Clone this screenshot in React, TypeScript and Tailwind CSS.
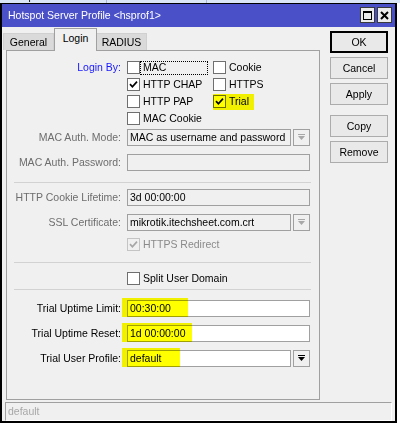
import React from 'react';

// --- small building blocks ---
const Check = ({ checked, disabled }: { checked?: boolean; disabled?: boolean }) => (
  <span
    className={`w-[13px] h-[13px] border flex items-center justify-center shrink-0 ${
      disabled ? 'border-[#c4c4c4] bg-[#f0f0f0]' : 'border-[#6f6f6f] bg-white'
    }`}
  >
    {checked && (
      <svg width="9" height="9" viewBox="0 0 9 9">
        <path d="M1 4.2 L3.4 6.8 L8 1.6" stroke={disabled ? '#a6a6a6' : '#000'} strokeWidth="1.7" fill="none" />
      </svg>
    )}
  </span>
);

const Arrow = ({ disabled }: { disabled?: boolean }) => (
  <svg width="7" height="7" viewBox="0 0 7 7">
    <rect x="0" y="0" width="7" height="1" fill={disabled ? '#a8a8a8' : '#000'} />
    <path d="M0 2 H7 L3.5 6 Z" fill={disabled ? '#a8a8a8' : '#000'} />
  </svg>
);

const Field = ({
  value,
  white,
  dropdown,
  arrowDisabled,
}: {
  value?: string;
  white?: boolean;
  dropdown?: boolean;
  arrowDisabled?: boolean;
}) => (
  <div className="flex gap-[2px] w-[183px] h-[17px]">
    <div
      className={`flex-1 h-full border border-[#a0a0a0] flex items-center px-[2px] text-black ${
        white ? 'bg-white' : 'bg-[#f0f0f0]'
      }`}
    >
      {value}
    </div>
    {dropdown && (
      <div className="w-[17px] h-full border border-[#a0a0a0] bg-[#f0f0f0] flex items-center justify-center">
        <Arrow disabled={arrowDisabled} />
      </div>
    )}
  </div>
);

const Row = ({
  label,
  muted,
  children,
  mark,
}: {
  label: string;
  muted?: boolean;
  children: React.ReactNode;
  mark?: number;
}) => (
  <div className="relative flex items-center h-[17px]">
    <div className={`w-[114px] text-right ${muted ? 'text-[#6d6d6d]' : 'text-black'}`}>{label}</div>
    <div className="ml-[6px]">{children}</div>
    {mark && (
      <div
        className="absolute left-[115px] top-[-2px] h-[19px] bg-[#ffff00] mix-blend-multiply"
        style={{ width: mark }}
      />
    )}
  </div>
);

const Sep = () => <div className="ml-[7px] w-[297px] h-px bg-[#d2d2d2]" />;

const Opt = ({
  text,
  checked,
  focus,
  w,
}: {
  text: string;
  checked?: boolean;
  focus?: boolean;
  w?: string;
}) => (
  <div className={`flex items-center h-[17px] ${w ?? ''}`}>
    <Check checked={checked} />
    <span
      className={`h-[14px] flex items-center pl-[2px] border ${
        focus ? 'border-dotted border-black w-[68px]' : 'border-transparent'
      }`}
    >
      {text}
    </span>
  </div>
);

const Btn = ({ children, def }: { children: React.ReactNode; def?: boolean }) => (
  <div
    className={`w-[58px] h-[22px] flex items-center justify-center bg-[#e9e9e9] text-black ${
      def ? 'border-2 border-black' : 'border border-[#acacac]'
    }`}
  >
    {children}
  </div>
);

export default function App() {
  return (
    <div className="w-[400px] h-[430px] bg-white overflow-hidden font-['Liberation_Sans',Arial,sans-serif] text-[10.5px] leading-none">
      {/* bit of the window behind */}
      <div className="h-[3px] bg-[#dae5f5] overflow-hidden flex relative">
        <div className="w-[107px] border-r border-[#a9b9d2] pl-[8px] text-[10px] -mt-[8px] text-black">Hotspot</div>
        <div className="w-[100px] border-r border-[#a9b9d2]" />
      </div>

      <div className="w-[397px] h-[420px] border-t border-x-2 border-b-2 border-black bg-[#f0f0f0] flex flex-col">
        {/* title bar */}
        <div className="h-[23px] bg-[#4a50c8] flex items-start">
          <div className="flex-1 h-full flex items-center pl-[6px] text-white text-[10.5px]">
            Hotspot Server Profile &lt;hsprof1&gt;
          </div>
          <div className="flex gap-[2px] pt-[3px] pr-[3px]">
            <div className="w-[15px] h-[16px] bg-[#ececec] border border-[#3a3a3a] flex items-center justify-center">
              <div className="w-[9px] h-[9px] border border-black border-t-2" />
            </div>
            <div className="w-[15px] h-[16px] bg-[#ececec] border border-[#3a3a3a] flex items-center justify-center">
              <svg width="9" height="9" viewBox="0 0 9 9">
                <path d="M1 1 L8 8 M8 1 L1 8" stroke="#000" strokeWidth="2" />
              </svg>
            </div>
          </div>
        </div>

        <div className="flex-1 flex flex-col">
          <div className="flex h-[373px]">
            {/* left: tabs + panel */}
            <div className="w-[318px] flex flex-col">
              <div className="h-[23px] flex items-end pl-[1px] text-black">
                <div className="w-[51px] h-[17px] bg-[#dadada] border border-b-0 border-[#d0d0d0] flex items-center justify-center">
                  General
                </div>
                <div className="relative z-10 w-[43px] h-[23px] -mb-px bg-[#f0f0f0] border border-b-0 border-[#a0a0a0] flex items-center justify-center pb-[3px]">
                  Login
                </div>
                <div className="w-[50px] h-[17px] bg-[#dadada] border border-b-0 border-l-0 border-[#d0d0d0] flex items-center justify-center">
                  RADIUS
                </div>
              </div>

              <div className="ml-[4px] w-[314px] h-[350px] border border-[#a0a0a0] flex flex-col">
                {/* login by */}
                <div className="flex pt-[8px]">
                  <div className="w-[114px] text-right text-[#1818ff] h-[17px] flex items-center justify-end">Login By:</div>
                  <div className="ml-[6px] grid grid-cols-[86px_auto]">
                    <Opt text="MAC" focus />
                    <Opt text="Cookie" />
                    <Opt text="HTTP CHAP" checked />
                    <Opt text="HTTPS" />
                    <Opt text="HTTP PAP" />
                    <div className="relative">
                      <Opt text="Trial" checked />
                      <div className="absolute left-0 top-[1px] w-[41px] h-[16px] bg-[#ffff00] mix-blend-multiply" />
                    </div>
                    <Opt text="MAC Cookie" />
                  </div>
                </div>

                <div className="mt-[2px] flex flex-col gap-[8px]">
                  <Row label="MAC Auth. Mode:" muted>
                    <Field value="MAC as username and password" dropdown arrowDisabled />
                  </Row>
                  <Row label="MAC Auth. Password:" muted>
                    <Field />
                  </Row>
                </div>

                <div className="mt-[11px] mb-[6px]">
                  <Sep />
                </div>

                <div className="flex flex-col gap-[8px]">
                  <Row label="HTTP Cookie Lifetime:" muted>
                    <Field value="3d 00:00:00" />
                  </Row>
                  <Row label="SSL Certificate:" muted>
                    <Field value="mikrotik.itechsheet.com.crt" dropdown arrowDisabled />
                  </Row>
                </div>

                <div className="mt-[5px] h-[17px] flex items-center pl-[120px] text-[#8a8a8a]">
                  <Check checked disabled />
                  <span className="pl-[3px]">HTTPS Redirect</span>
                </div>

                <div className="mt-[9px] mb-[7px]">
                  <Sep />
                </div>

                <div className="h-[17px] flex items-center pl-[120px] text-black">
                  <Check />
                  <span className="pl-[3px]">Split User Domain</span>
                </div>

                <div className="mt-[2px] mb-[10px]">
                  <Sep />
                </div>

                <div className="flex flex-col gap-[8px]">
                  <Row label="Trial Uptime Limit:" mark={66}>
                    <Field value="00:30:00" white />
                  </Row>
                  <Row label="Trial Uptime Reset:" mark={70}>
                    <Field value="1d 00:00:00" white />
                  </Row>
                  <Row label="Trial User Profile:" mark={58}>
                    <Field value="default" white dropdown />
                  </Row>
                </div>
              </div>
            </div>

            {/* right: buttons */}
            <div className="ml-[10px] pt-[4px] flex flex-col">
              <Btn def>OK</Btn>
              <div className="mt-[4px]"><Btn>Cancel</Btn></div>
              <div className="mt-[4px]"><Btn>Apply</Btn></div>
              <div className="mt-[10px]"><Btn>Copy</Btn></div>
              <div className="mt-[4px]"><Btn>Remove</Btn></div>
            </div>
          </div>

          {/* status bar */}
          <div className="mt-[2px] ml-[3px] w-[387px] h-[19px] border border-[#a0a0a0] border-r-white border-b-white flex items-center pl-[2px] text-[#a8a8a8]">
            default
          </div>
        </div>
      </div>
    </div>
  );
}
